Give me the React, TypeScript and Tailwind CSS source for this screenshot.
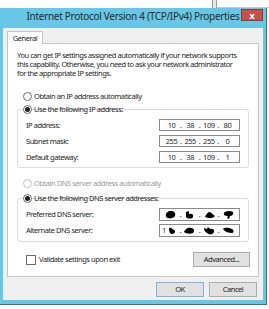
import React from "react";

const font = { fontFamily: '"Noto Sans", "Open Sans", Arial, sans-serif' };

function Radio({ checked, disabled, label }: { checked?: boolean; disabled?: boolean; label: string }) {
  return (
    <div className={`flex items-center h-[12px] ${disabled ? "text-[#9a9a9a]" : "text-[#1e1e1e]"}`}>
      <span
        className={`w-[9px] h-[9px] rounded-full border bg-white flex items-center justify-center ${
          disabled ? "border-[#c4c4c4]" : "border-[#6e6e6e]"
        }`}
      >
        {checked && <span className="w-[5px] h-[5px] rounded-full bg-[#1e1e1e]" />}
      </span>
      <span className="ml-[2px]">{label}</span>
    </div>
  );
}

function IpBox({ parts }: { parts: string[] }) {
  return (
    <div className="w-[81px] h-[12px] border border-[#8a8a8a] bg-white flex items-center px-[3px] text-[#1e1e1e]">
      {parts.map((p, i) => (
        <React.Fragment key={i}>
          <span className="flex-1 text-center">{p}</span>
          {i < 3 && <span>.</span>}
        </React.Fragment>
      ))}
    </div>
  );
}

function Blob({ d }: { d: string }) {
  return (
    <svg width="13" height="9" viewBox="0 0 13 9" className="mx-auto">
      <path d={d} fill="#000" />
    </svg>
  );
}

function DnsBox({ blobs, lead }: { blobs: string[]; lead?: string }) {
  return (
    <div className="w-[81px] h-[13px] border border-[#8a8a8a] bg-white flex items-center px-[2px] text-[#1e1e1e]">
      {blobs.map((d, i) => (
        <React.Fragment key={i}>
          <span className="flex-1 flex items-center">
            {i === 0 && lead && <span className="-mr-[3px]">{lead}</span>}
            <Blob d={d} />
          </span>
          {i < 3 && <span>.</span>}
        </React.Fragment>
      ))}
    </div>
  );
}

function Row({ label, children }: { label: string; children: React.ReactNode }) {
  return (
    <div className="flex items-center justify-between">
      <span className="text-[#1e1e1e]">{label}</span>
      {children}
    </div>
  );
}

function Button({ children, primary, className = "" }: { children: React.ReactNode; primary?: boolean; className?: string }) {
  return (
    <div
      className={`h-[15px] flex items-center justify-center bg-[#e1e1e1] border text-[#1e1e1e] ${
        primary ? "border-[#7fb3e3]" : "border-[#adadad]"
      } ${className}`}
    >
      {children}
    </div>
  );
}

export default function App() {
  return (
    <div
      className="w-[269px] h-[309px] bg-white overflow-hidden text-[7.5px] leading-[9px] tracking-[-0.45px]"
      style={font}
    >
      <div className="h-[8px] flex">
        <div className="w-[212px]" />
        <div className="w-[5px] h-full border-x border-[#9a9a9a] bg-[#e6e6e6]" />
        <div className="flex-1 border-b border-[#c8c8c8]" />
      </div>

      <div className="w-[267px] h-[297px] bg-[#68c6e6] border-r border-b border-[#3f6f84] px-[3px] pb-[4px] flex flex-col">
        <div className="h-[20px] flex items-start">
          <div className="flex-1 pl-[22px] pt-[1px] text-center text-[10px] leading-[15px] tracking-[-0.3px] whitespace-nowrap text-[#2a2a2a]">
            Internet Protocol Version 4 (TCP/IPv4) Properties
          </div>
          <div className="w-[22px] h-[12px] mt-[1px] bg-[#c7504a] border border-[#8e3a35] flex items-center justify-center text-white text-[9px] font-bold leading-none">
            x
          </div>
        </div>

        <div className="flex-1 bg-[#f0f0f0] px-[4px] pt-[3px] flex flex-col">
          <div className="w-[36px] h-[13px] bg-white border border-b-0 border-[#c6c6c6] flex items-center justify-center text-[#1e1e1e] -mb-px relative">
            General
          </div>
          <div className="h-[234px] bg-white border border-[#c6c6c6] px-[9px] pt-[7px]">
            <p className="text-[#1e1e1e] leading-[9px] w-[223px]">
              You can get IP settings assigned automatically if your network supports this capability. Otherwise, you need to ask your network administrator for the appropriate IP settings.
            </p>

            <div className="mt-[12px] pl-[6px] flex flex-col gap-[1px]">
              <Radio label="Obtain an IP address automatically" />
              <Radio checked label="Use the following IP address:" />
            </div>
            <div className="-mt-[6px] w-[232px] border border-[#dcdcdc] rounded-[3px] px-[8px] pt-[9px] pb-[4px] flex flex-col gap-[4px]">
              <Row label="IP address:">
                <IpBox parts={["10", "38", "109", "80"]} />
              </Row>
              <Row label="Subnet mask:">
                <IpBox parts={["255", "255", "255", "0"]} />
              </Row>
              <Row label="Default gateway:">
                <IpBox parts={["10", "38", "109", "1"]} />
              </Row>
            </div>

            <div className="mt-[9px] pl-[6px] flex flex-col gap-[3px]">
              <Radio disabled label="Obtain DNS server address automatically" />
              <Radio checked label="Use the following DNS server addresses:" />
            </div>
            <div className="-mt-[6px] w-[232px] border border-[#dcdcdc] rounded-[3px] px-[8px] pt-[9px] pb-[4px] flex flex-col gap-[3px]">
              <Row label="Preferred DNS server:">
                <DnsBox
                  blobs={[
                    "M2 6 C1 3 4 1 7 1 C10 1 12 3 11 6 C10 8 6 9 4 8 C3 8 2 7 2 6Z",
                    "M3 2 L6 1 L6 4 C8 3 11 4 10 7 C9 9 5 9 3 7Z",
                    "M2 7 C3 4 5 2 7 2 C9 3 10 5 12 6 C11 8 6 9 2 7Z",
                    "M2 3 C3 1 8 0 11 2 C12 4 10 6 8 6 L7 9 L5 8 L6 6 C3 6 1 5 2 3Z",
                  ]}
                />
              </Row>
              <Row label="Alternate DNS server:">
                <DnsBox
                  lead="1"
                  blobs={[
                    "M4 2 C6 1 7 3 9 4 C11 5 10 8 7 8 C5 8 4 6 4 2Z",
                    "M1 6 C2 3 5 1 8 2 C11 2 12 5 10 7 C8 8 3 8 1 6Z",
                    "M1 2 L4 3 L5 1 L7 3 C9 2 12 3 11 6 C10 9 6 9 4 7 C2 6 1 4 1 2Z",
                    "M1 3 C3 1 7 2 10 3 C12 4 12 7 10 7 C7 7 3 6 1 3Z",
                  ]}
                />
              </Row>
            </div>

            <div className="mt-[10px] flex items-center justify-between">
              <div className="flex items-center pl-[9px]">
                <span className="w-[10px] h-[10px] border border-[#6e6e6e] bg-white" />
                <span className="ml-[3px] text-[#1e1e1e]">Validate settings upon exit</span>
              </div>
              <Button className="w-[57px] mr-[-1px]">Advanced...</Button>
            </div>
          </div>

          <div className="mt-[5px] flex justify-end gap-[5px] pr-[2px]">
            <Button primary className="w-[48px]">OK</Button>
            <Button className="w-[48px]">Cancel</Button>
          </div>
        </div>
      </div>
    </div>
  );
}
